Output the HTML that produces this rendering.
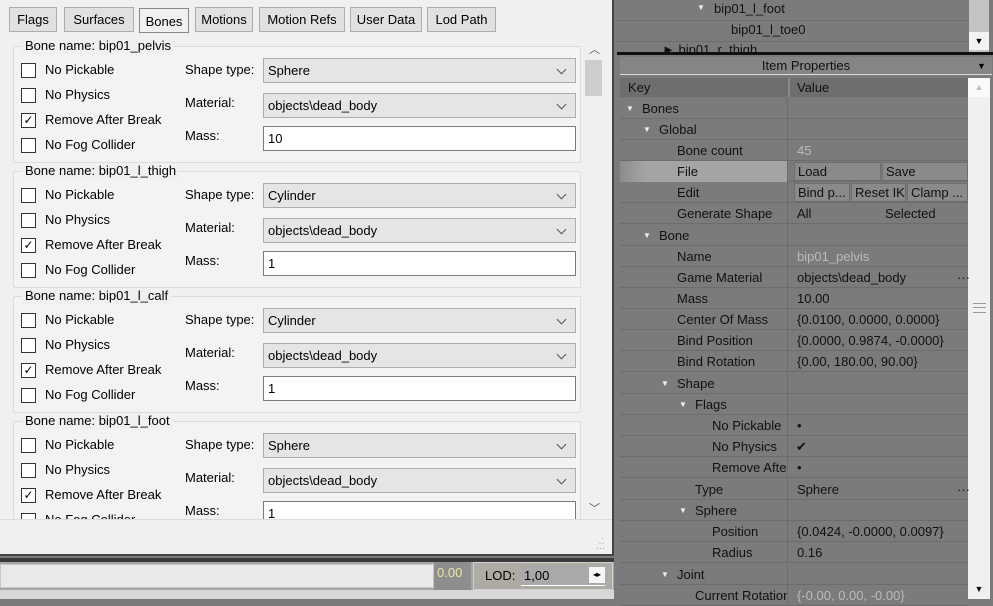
<!DOCTYPE html>
<html><head><meta charset="utf-8"><style>
*{box-sizing:border-box;margin:0;padding:0}
body{width:993px;height:599px;overflow:hidden;background:#7b7b7b;font-family:"Liberation Sans",sans-serif;font-size:13px;color:#000;position:relative}
.a{position:absolute;white-space:nowrap}
#dlg{position:absolute;left:0;top:0;width:614px;height:556px;background:#f0f0f0;border-right:2px solid #444;border-bottom:2px solid #444;overflow:hidden}
.tab{position:absolute;top:7px;height:25px;border:1px solid #adadad;background:#e1e1e1;text-align:center;line-height:23px;font-size:13px}
.grp{position:absolute;left:13px;width:568px;height:117px;border:1px solid #dcdcdc;border-radius:2px;background:#f3f3f3}
.gl{position:absolute;left:8px;top:-9px;background:#f0f0f0;padding:0 3px;line-height:16px}
.cb{position:absolute;left:7px;width:15px;height:15px;border:1px solid #333;background:#fff}
.cbl{position:absolute;left:31px;line-height:16px}
.lbl{position:absolute;left:171px;line-height:16px}
.combo{position:absolute;left:249px;width:313px;height:25px;border:1px solid #adadad;background:#e5e5e5;line-height:23px;padding-left:4px}
.combo:after{content:"";position:absolute;right:10px;top:7px;width:6px;height:6px;border-right:1px solid #555;border-bottom:1px solid #555;transform:rotate(45deg)}
.inp{position:absolute;left:249px;width:313px;height:25px;border:1px solid #7a7a7a;background:#fff;line-height:23px;padding-left:4px}
#rp{position:absolute;left:617px;top:0;width:376px;height:599px;background:#7b7b7b}
.row{position:absolute;left:3px;width:348px;height:21px;border-bottom:1px solid #6c6c6c;color:#111;font-size:13px;line-height:21px}
.row .k{position:absolute;left:0;width:168px;height:21px;border-right:1px solid #6c6c6c}
.row .v{position:absolute;left:177px}
.tri{position:absolute;font-size:8px;color:#eee}
.btn{position:absolute;top:1px;height:19px;background:#8a8a8a;border:1px solid #6e6e6e;line-height:17px;padding-left:3px}
</style></head><body>
<div id="dlg">
<div class="tab" style="left:9px;width:48px">Flags</div>
<div class="tab" style="left:64px;width:70px">Surfaces</div>
<div class="tab" style="left:139px;width:50px;background:#f0f0f0;top:8px;height:25px;line-height:26px;border-color:#888">Bones</div>
<div class="tab" style="left:195px;width:58px">Motions</div>
<div class="tab" style="left:259px;width:86px">Motion Refs</div>
<div class="tab" style="left:350px;width:72px">User Data</div>
<div class="tab" style="left:427px;width:69px">Lod Path</div>

<div class="a" style="left:0;top:38px;width:583px;height:481px;overflow:hidden">
 <div class="grp" style="top:8px"><div class="gl">Bone name: bip01_pelvis</div>
  <div class="cb" style="top:16px"></div><div class="cbl" style="top:15px">No Pickable</div>
  <div class="cb" style="top:41px"></div><div class="cbl" style="top:40px">No Physics</div>
  <div class="cb" style="top:66px;font-size:12px;line-height:12px;text-align:center">✓</div><div class="cbl" style="top:65px">Remove After Break</div>
  <div class="cb" style="top:91px"></div><div class="cbl" style="top:90px">No Fog Collider</div>
  <div class="lbl" style="top:15px">Shape type:</div><div class="combo" style="top:11px">Sphere</div>
  <div class="lbl" style="top:48px">Material:</div><div class="combo" style="top:46px">objects\dead_body</div>
  <div class="lbl" style="top:81px">Mass:</div><div class="inp" style="top:79px">10</div>
 </div>
 <div class="grp" style="top:133px"><div class="gl">Bone name: bip01_l_thigh</div>
  <div class="cb" style="top:16px"></div><div class="cbl" style="top:15px">No Pickable</div>
  <div class="cb" style="top:41px"></div><div class="cbl" style="top:40px">No Physics</div>
  <div class="cb" style="top:66px;font-size:12px;line-height:12px;text-align:center">✓</div><div class="cbl" style="top:65px">Remove After Break</div>
  <div class="cb" style="top:91px"></div><div class="cbl" style="top:90px">No Fog Collider</div>
  <div class="lbl" style="top:15px">Shape type:</div><div class="combo" style="top:11px">Cylinder</div>
  <div class="lbl" style="top:48px">Material:</div><div class="combo" style="top:46px">objects\dead_body</div>
  <div class="lbl" style="top:81px">Mass:</div><div class="inp" style="top:79px">1</div>
 </div>
 <div class="grp" style="top:258px"><div class="gl">Bone name: bip01_l_calf</div>
  <div class="cb" style="top:16px"></div><div class="cbl" style="top:15px">No Pickable</div>
  <div class="cb" style="top:41px"></div><div class="cbl" style="top:40px">No Physics</div>
  <div class="cb" style="top:66px;font-size:12px;line-height:12px;text-align:center">✓</div><div class="cbl" style="top:65px">Remove After Break</div>
  <div class="cb" style="top:91px"></div><div class="cbl" style="top:90px">No Fog Collider</div>
  <div class="lbl" style="top:15px">Shape type:</div><div class="combo" style="top:11px">Cylinder</div>
  <div class="lbl" style="top:48px">Material:</div><div class="combo" style="top:46px">objects\dead_body</div>
  <div class="lbl" style="top:81px">Mass:</div><div class="inp" style="top:79px">1</div>
 </div>
 <div class="grp" style="top:383px"><div class="gl">Bone name: bip01_l_foot</div>
  <div class="cb" style="top:16px"></div><div class="cbl" style="top:15px">No Pickable</div>
  <div class="cb" style="top:41px"></div><div class="cbl" style="top:40px">No Physics</div>
  <div class="cb" style="top:66px;font-size:12px;line-height:12px;text-align:center">✓</div><div class="cbl" style="top:65px">Remove After Break</div>
  <div class="cb" style="top:91px"></div><div class="cbl" style="top:90px">No Fog Collider</div>
  <div class="lbl" style="top:15px">Shape type:</div><div class="combo" style="top:11px">Sphere</div>
  <div class="lbl" style="top:48px">Material:</div><div class="combo" style="top:46px">objects\dead_body</div>
  <div class="lbl" style="top:81px">Mass:</div><div class="inp" style="top:79px">1</div>
 </div>
</div>
<div class="a" style="left:583px;top:38px;width:21px;height:481px;background:#f0f0f0"></div>
<div class="a" style="left:589px;top:41px;font-size:11px;color:#555">︿</div>
<div class="a" style="left:585px;top:60px;width:17px;height:36px;background:#cdcdcd"></div>
<div class="a" style="left:589px;top:500px;font-size:11px;color:#555">﹀</div>
<div class="a" style="left:0;top:519px;width:614px;height:1px;background:#dcdcdc"></div>
<div class="a" style="left:596px;top:536px;font-size:9px;color:#999;line-height:5px">&nbsp;&nbsp;·<br>&nbsp;··<br>···</div>
</div>

<div class="a" style="left:0;top:558px;width:614px;height:41px;background:#a6a6a6"></div>
<div class="a" style="left:0;top:558px;width:614px;height:4px;background:#3a3a3a"></div>
<div class="a" style="left:0;top:564px;width:434px;height:24px;background:#e9e9e9;border:1px solid #c8c8c8"></div>
<div class="a" style="left:434px;top:562px;width:37px;height:28px;background:#8e8e8e;color:#e8e8a0;line-height:22px;padding-left:3px">0.00</div>
<div class="a" style="left:473px;top:562px;width:140px;height:28px;background:#aeaba4;border:1px solid #d0d0d0"></div>
<div class="a" style="left:485px;top:567px;line-height:18px">LOD:</div>
<div class="a" style="left:521px;top:566px;width:84px;height:20px;background:#a9a9a9;border-bottom:1px solid #fff;line-height:20px;padding-left:3px">1,00</div>
<div class="a" style="left:589px;top:567px;width:16px;height:16px;background:#f5f5f5;font-size:8px;text-align:center;line-height:16px">◂▸</div>
<div class="a" style="left:0;top:590px;width:614px;height:9px;background:#d8d8d8"></div>

<div id="rp">
<div class="a" style="left:0;top:0;width:352px;height:52px;background:#7b7b7b"></div>
<div class="a" style="left:0;top:20px;width:352px;height:1px;background:#6c6c6c"></div>
<div class="a" style="left:0;top:41px;width:352px;height:1px;background:#6c6c6c"></div>
<div class="a" style="left:80px;top:3px;font-size:8px;color:#eee">▼</div>
<div class="a" style="left:97px;top:1px;color:#111">bip01_l_foot</div>
<div class="a" style="left:114px;top:22px;color:#111">bip01_l_toe0</div>
<div class="a" style="left:45px;top:42px;color:#111;height:10px;overflow:hidden">► bip01_r_thigh</div>
<div class="a" style="left:352px;top:0;width:20px;height:52px;background:#c4c4c4"></div>
<div class="a" style="left:352px;top:32px;width:20px;height:18px;background:#f2f2f2;font-size:9px;text-align:center;line-height:18px">▼</div>
<div class="a" style="left:0;top:52px;width:376px;height:3px;background:#111"></div>
<div class="a" style="left:3px;top:57px;width:372px;height:18px;background:#858585;border-bottom:1px solid #ddd;text-align:center;line-height:18px;color:#111">Item Properties</div>
<div class="a" style="left:360px;top:57px;font-size:9px;line-height:18px">▼</div>
<div class="a" style="left:3px;top:78px;width:348px;height:19px;background:#6e6e6e;color:#111;line-height:19px"><span class="a" style="left:8px">Key</span><span class="a" style="left:168px;top:0;width:2px;height:19px;background:#8a8a8a"></span><span class="a" style="left:177px">Value</span></div>
<div class="a" style="left:351px;top:78px;width:22px;height:521px;background:#f0f0f0"></div>
<div class="a" style="left:351px;top:78px;width:22px;height:19px;background:#fafafa;color:#bbb;font-size:9px;text-align:center;line-height:19px">▲</div>
<div class="a" style="left:356px;top:303px;width:13px;height:10px;border-top:1px solid #999;border-bottom:1px solid #999"></div>
<div class="a" style="left:356px;top:307px;width:13px;height:1px;background:#999"></div>
<div class="a" style="left:351px;top:580px;width:22px;height:19px;color:#111;font-size:9px;text-align:center;line-height:19px">▼</div>

<div class="row" style="top:98px"><div class="k"><span class="tri" style="left:6px">▼</span><span class="a" style="left:22px">Bones</span></div></div>
<div class="row" style="top:119px"><div class="k"><span class="tri" style="left:23px">▼</span><span class="a" style="left:39px">Global</span></div></div>
<div class="row" style="top:140px"><div class="k"><span class="a" style="left:57px">Bone count</span></div><span class="v" style="color:#bbb">45</span></div>
<div class="row" style="top:161px"><div class="k" style="background:linear-gradient(90deg,#8c8c8c,#a4a4a4 15%)"><span class="a" style="left:57px">File</span></div><div class="btn" style="left:174px;width:87px">Load</div><div class="btn" style="left:262px;width:86px">Save</div></div>
<div class="row" style="top:182px"><div class="k"><span class="a" style="left:57px">Edit</span></div><div class="btn" style="left:174px;width:56px">Bind p...</div><div class="btn" style="left:231px;width:55px">Reset IK</div><div class="btn" style="left:287px;width:61px">Clamp ...</div></div>
<div class="row" style="top:203px"><div class="k"><span class="a" style="left:57px">Generate Shape</span></div><span class="v">All</span><span class="a" style="left:265px">Selected</span></div>
<div class="row" style="top:225px"><div class="k"><span class="tri" style="left:23px">▼</span><span class="a" style="left:39px">Bone</span></div></div>
<div class="row" style="top:246px"><div class="k"><span class="a" style="left:57px">Name</span></div><span class="v" style="color:#bbb">bip01_pelvis</span></div>
<div class="row" style="top:267px"><div class="k"><span class="a" style="left:57px">Game Material</span></div><span class="v">objects\dead_body</span><span class="a" style="left:337px">···</span></div>
<div class="row" style="top:288px"><div class="k"><span class="a" style="left:57px">Mass</span></div><span class="v">10.00</span></div>
<div class="row" style="top:309px"><div class="k"><span class="a" style="left:57px">Center Of Mass</span></div><span class="v">{0.0100, 0.0000, 0.0000}</span></div>
<div class="row" style="top:330px"><div class="k"><span class="a" style="left:57px">Bind Position</span></div><span class="v">{0.0000, 0.9874, -0.0000}</span></div>
<div class="row" style="top:351px"><div class="k"><span class="a" style="left:57px">Bind Rotation</span></div><span class="v">{0.00, 180.00, 90.00}</span></div>
<div class="row" style="top:373px"><div class="k"><span class="tri" style="left:41px">▼</span><span class="a" style="left:57px">Shape</span></div></div>
<div class="row" style="top:394px"><div class="k"><span class="tri" style="left:59px">▼</span><span class="a" style="left:75px">Flags</span></div></div>
<div class="row" style="top:415px"><div class="k"><span class="a" style="left:92px">No Pickable</span></div><span class="a" style="left:177px">•</span></div>
<div class="row" style="top:436px"><div class="k"><span class="a" style="left:92px">No Physics</span></div><span class="a" style="left:176px">✔</span></div>
<div class="row" style="top:457px"><div class="k" style="overflow:hidden"><span class="a" style="left:92px">Remove After</span></div><span class="a" style="left:177px">•</span></div>
<div class="row" style="top:479px"><div class="k"><span class="a" style="left:75px">Type</span></div><span class="v">Sphere</span><span class="a" style="left:337px">···</span></div>
<div class="row" style="top:500px"><div class="k"><span class="tri" style="left:59px">▼</span><span class="a" style="left:75px">Sphere</span></div></div>
<div class="row" style="top:521px"><div class="k"><span class="a" style="left:92px">Position</span></div><span class="v">{0.0424, -0.0000, 0.0097}</span></div>
<div class="row" style="top:542px"><div class="k"><span class="a" style="left:92px">Radius</span></div><span class="v">0.16</span></div>
<div class="row" style="top:564px"><div class="k"><span class="tri" style="left:41px">▼</span><span class="a" style="left:57px">Joint</span></div></div>
<div class="row" style="top:585px"><div class="k" style="overflow:hidden"><span class="a" style="left:75px">Current Rotation</span></div><span class="v" style="color:#bbb">{-0.00, 0.00, -0.00}</span></div>
</div>
</body></html>
